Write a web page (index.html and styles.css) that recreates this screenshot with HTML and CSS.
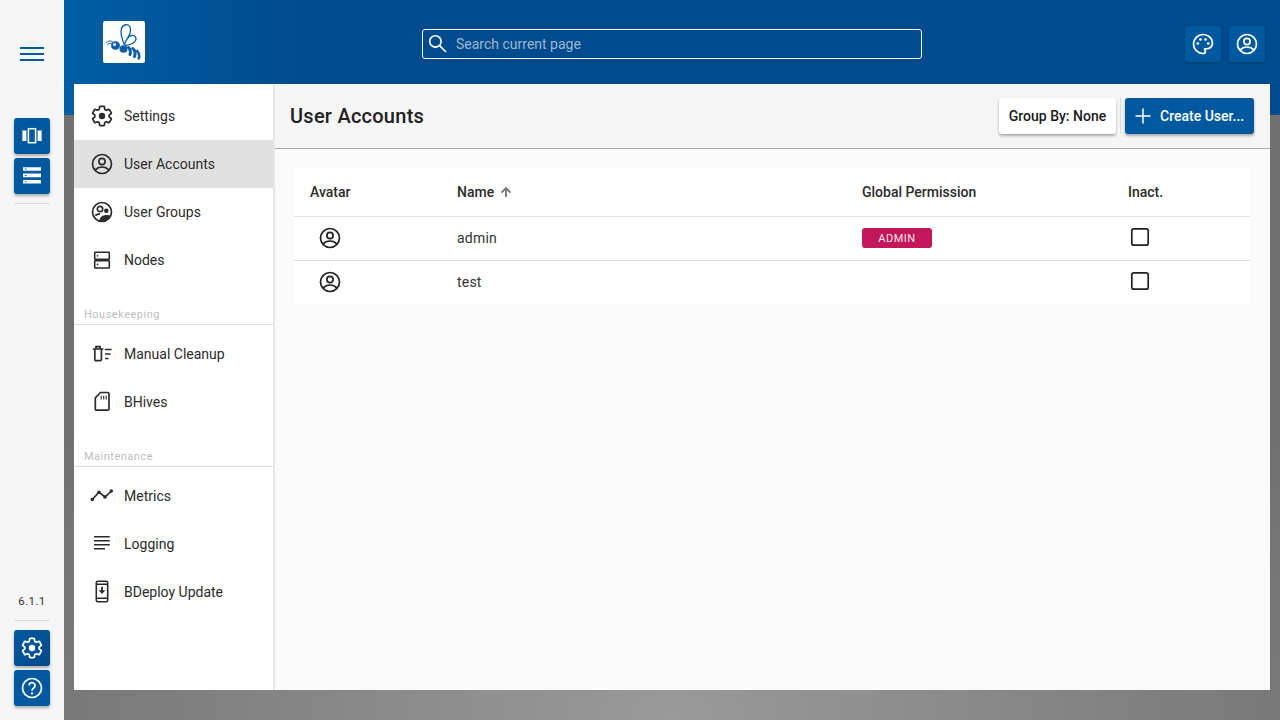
FILE: index.html
```html
<!DOCTYPE html>
<html lang="en">
<head>
<meta charset="utf-8">
<title>User Accounts</title>
<link rel="stylesheet" href="styles.css">
</head>
<body>
<svg class="defs" width="0" height="0" aria-hidden="true">
  <symbol id="i-settings" viewBox="0 0 24 24"><path transform="translate(12 12) scale(.96) translate(-12 -12)" fill="none" stroke="currentColor" stroke-width="1.800" stroke-linejoin="round" d="M19.43 12.98c.04-.32.07-.64.07-.98 0-.34-.03-.66-.07-.98l2.11-1.65c.19-.15.24-.42.12-.64l-2-3.46c-.09-.16-.26-.25-.44-.25-.06 0-.12.01-.17.03l-2.49 1c-.52-.4-1.08-.73-1.69-.98l-.38-2.65C14.46 2.18 14.25 2 14 2h-4c-.25 0-.46.18-.49.42l-.38 2.65c-.61.25-1.17.59-1.69.98l-2.49-1c-.06-.02-.12-.03-.18-.03-.17 0-.34.09-.43.25l-2 3.46c-.13.22-.07.49.12.64l2.11 1.65c-.04.32-.07.65-.07.98 0 .33.03.66.07.98l-2.11 1.65c-.19.15-.24.42-.12.64l2 3.46c.09.16.26.25.44.25.06 0 .12-.01.17-.03l2.49-1c.52.4 1.08.73 1.69.98l.38 2.65c.03.24.24.42.49.42h4c.25 0 .46-.18.49-.42l.38-2.65c.61-.25 1.17-.59 1.69-.98l2.49 1c.06.02.12.03.18.03.17 0 .34-.09.43-.25l2-3.46c.12-.22.07-.49-.12-.64l-2.11-1.65z"/><circle cx="12" cy="12" r="3.200"/></symbol>
  <symbol id="i-account" viewBox="0 0 24 24"><g fill="none" stroke="currentColor" stroke-width="1.700"><circle cx="12" cy="12" r="9.500"/><circle cx="12" cy="9.500" r="3.100"/><path d="M5 18.100C6.800 16 9.300 15 12 15s5.200 1 7 3.100"/></g></symbol>
  <symbol id="i-group" viewBox="0 0 24 24"><g fill="none" stroke="currentColor" stroke-width="1.700"><circle cx="12" cy="12" r="9.500"/><circle cx="10" cy="9" r="2.700"/><path d="M5.200 15.500C6.500 14.400 8.300 13.800 10 13.800"/></g><circle cx="16.300" cy="10.700" r="2.300"/><path d="M9.200 21.500C9.400 17.800 11.500 15.500 15.500 15 17.500 14.800 19.700 15.100 21 15.800 19.800 19 16 22 11.800 22z"/></symbol>
  <symbol id="i-dns" viewBox="0 0 24 24"><g fill="none" stroke="currentColor" stroke-width="1.600"><rect x="4.700" y="4.200" width="14.600" height="7.200" rx=".6"/><rect x="4.700" y="12.800" width="14.600" height="7.200" rx=".6"/></g><circle cx="7.500" cy="7.800" r=".9"/><circle cx="7.500" cy="16.400" r=".9"/></symbol>
  <symbol id="i-sweep" viewBox="0 0 24 24"><path fill="none" stroke="currentColor" stroke-width="1.700" d="M4.800 7.500V17.500a1.200 1.200 0 0 0 1.200 1.200h4.200a1.200 1.200 0 0 0 1.200-1.200V7.500M2.800 7H13.400M6 6.500V4.700h4v1.800M15 7.500h6.700M15 12h5.500M15 16.500h3.500"/></symbol>
  <symbol id="i-sd" viewBox="0 0 24 24"><path fill="none" stroke="currentColor" stroke-width="1.700" stroke-linejoin="round" d="M10.500 2.500H17.800a1.200 1.200 0 0 1 1.200 1.200V19a1.200 1.200 0 0 1-1.200 1.200H6.500A1.200 1.200 0 0 1 5.300 19V7.800z"/><path fill="none" stroke="currentColor" stroke-width="1.100" d="M11.200 5.800v3.600M13.700 5.800v3.600M16.200 5.800v3.600"/></symbol>
  <symbol id="i-timeline" viewBox="0 0 24 24"><path fill="none" stroke="currentColor" stroke-width="1.700" d="M2.300 15.500L9 8.200l6 4.800 6.300-6"/><circle cx="2.300" cy="15.500" r="1.800"/><circle cx="9" cy="8.200" r="1.800"/><circle cx="15" cy="13" r="1.800"/><circle cx="21.300" cy="7" r="1.800"/></symbol>
  <symbol id="i-subject" viewBox="0 0 24 24"><path fill="none" stroke="currentColor" stroke-width="1.500" d="M4 4.800h15.800M4 8.800h15.800M4 12.800h15.800M4 16.800h11"/></symbol>
  <symbol id="i-update" viewBox="0 0 24 24"><g fill="none" stroke="currentColor" stroke-width="1.600"><rect x="6.300" y="1.300" width="11.400" height="20.400" rx="1.500"/><path d="M6.300 4.300h11.400M6.300 18.300h11.400"/></g><path d="M11.100 6.800h1.800v3.500h2.400L12 13.900 8.700 10.300h2.400z"/></symbol>
  <symbol id="i-search" viewBox="0 0 24 24"><g fill="none" stroke="currentColor" stroke-width="1.600"><circle cx="9.400" cy="9.400" r="5.700"/><path d="M13.600 13.600L20 20"/></g></symbol>
  <symbol id="i-carousel" viewBox="0 0 24 24"><path d="M2.400 6.500h4v10.500h-4zM17.600 6.500h4v10.500h-4z"/><rect x="8.400" y="4.700" width="7.200" height="14" fill="none" stroke="currentColor" stroke-width="1.500"/></symbol>
  <symbol id="i-storage" viewBox="0 0 24 24"><path fill-rule="evenodd" d="M3 3.200h18v3.600H3zM4.800 4.500v1h1.800v-1zM3 9.600h18v3.600H3zM4.800 10.900v1h1.800v-1zM3 16h18v3.400H3zM4.800 17.200v1h1.800v-1z"/></symbol>
  <symbol id="i-palette" viewBox="0 0 24 24"><path transform="translate(12 12) scale(.95) translate(-12 -12)" fill="none" stroke="currentColor" stroke-width="1.800" d="M12 22C6.490 22 2 17.510 2 12S6.490 2 12 2s10 4.040 10 9c0 3.310-2.690 6-6 6h-1.770c-.28 0-.5.220-.5.500 0 .12.050.23.130.33.410.47.640 1.060.640 1.670 0 1.380-1.120 2.500-2.500 2.500z"/><circle cx="6.800" cy="11.500" r="1.350"/><circle cx="9.500" cy="7.500" r="1.350"/><circle cx="14.500" cy="7.500" r="1.350"/><circle cx="17.200" cy="11.500" r="1.350"/></symbol>
  <symbol id="i-help" viewBox="0 0 24 24"><g fill="none" stroke="currentColor" stroke-width="1.700"><circle cx="12" cy="12" r="9.500"/><path d="M9 9.500a3 3 0 1 1 4.700 2.500c-1.100.7-1.700 1.400-1.700 2.800"/></g><circle cx="12" cy="17.400" r="1.100"/></symbol>
  <symbol id="i-add" viewBox="0 0 24 24"><path d="M19.500 12.750h-6.750v6.750h-1.500v-6.750H4.500v-1.500h6.750V4.500h1.500v6.750h6.750v1.500z"/></symbol>
  <symbol id="i-up" viewBox="0 0 24 24"><path stroke="currentColor" stroke-width="1.500" d="M4 12l1.410 1.410L11 7.830V20h2V7.830l5.580 5.590L20 12l-8-8-8 8z"/></symbol>
  <symbol id="i-box" viewBox="0 0 24 24"><rect x="3.800" y="3.800" width="16.400" height="16.400" rx="2" fill="none" stroke="currentColor" stroke-width="1.700"/></symbol>
</svg>

<div class="app">
  <aside class="rail">
    <button class="menu" aria-label="Menu"><span></span><span></span><span></span></button>
    <div class="rail-group rail-top">
      <a class="tile"><svg class="icon"><use href="#i-carousel"/></svg></a>
      <a class="tile"><svg class="icon"><use href="#i-storage"/></svg></a>
      <hr class="rail-sep">
    </div>
    <div class="rail-group rail-bottom">
      <div class="version">6.1.1</div>
      <hr class="rail-sep">
      <a class="tile tile-active"><svg class="icon"><use href="#i-settings"/></svg></a>
      <a class="tile"><svg class="icon"><use href="#i-help"/></svg></a>
    </div>
  </aside>

  <div class="main">
    <header class="topbar">
      <div class="top-left">
        <div class="logo">
          <svg viewBox="0 0 42 42" width="42" height="42">
            <g fill="none" stroke="#0b5ea8" stroke-linecap="round">
              <path stroke-width="1.300" d="M21 23C19 18 17 12 18.500 7.500C20 3 25.500 2.500 27 6C28.500 10 26.500 14 25 16.500"/>
              <path stroke-width="1.300" d="M21.500 23.500C23 19 25.500 15 28.500 14.500C32 14 34 17 32.500 19.500C31 22.500 26 24 22.500 24.500"/>
              <path stroke-width="3" d="M25.500 26.500C27.500 28.500 27.800 31 27 33.500"/>
              <path stroke-width="3" d="M29.800 27.500C32 29.500 32.500 33 31.500 35.500"/>
              <path stroke-width="2.600" d="M34.200 30C36 32 36.500 35 35.800 37.500"/>
              <path stroke-width="1" d="M3.500 21.500C5.500 19.500 8 19.500 10 21M4.500 23.500C6 22 8 22 9.500 22.500"/>
            </g>
            <ellipse cx="12.500" cy="24.500" rx="4.500" ry="4.300" fill="#0b5ea8"/>
            <circle cx="11.500" cy="23.500" r="1.500" fill="#fff"/>
            <ellipse cx="20.500" cy="28" rx="4" ry="3.800" fill="#0b5ea8"/>
          </svg>
        </div>
      </div>
      <label class="search">
        <svg class="icon"><use href="#i-search"/></svg>
        <span class="placeholder">Search current page</span>
      </label>
      <div class="top-right">
        <a class="tile tile-soft"><svg class="icon"><use href="#i-palette"/></svg></a>
        <a class="tile tile-soft"><svg class="icon"><use href="#i-account"/></svg></a>
      </div>
    </header>

    <div class="panels">
      <nav class="nav">
        <a class="nav-item"><svg class="icon"><use href="#i-settings"/></svg>Settings</a>
        <a class="nav-item is-current"><svg class="icon"><use href="#i-account"/></svg>User Accounts</a>
        <a class="nav-item"><svg class="icon"><use href="#i-group"/></svg>User Groups</a>
        <a class="nav-item"><svg class="icon"><use href="#i-dns"/></svg>Nodes</a>
        <div class="nav-section">Housekeeping</div>
        <a class="nav-item"><svg class="icon"><use href="#i-sweep"/></svg>Manual Cleanup</a>
        <a class="nav-item"><svg class="icon"><use href="#i-sd"/></svg>BHives</a>
        <div class="nav-section">Maintenance</div>
        <a class="nav-item"><svg class="icon"><use href="#i-timeline"/></svg>Metrics</a>
        <a class="nav-item"><svg class="icon"><use href="#i-subject"/></svg>Logging</a>
        <a class="nav-item"><svg class="icon"><use href="#i-update"/></svg>BDeploy Update</a>
      </nav>

      <section class="content">
        <div class="titlebar">
          <h1>User Accounts</h1>
          <div class="actions">
            <button class="btn btn-white">Group By: None</button>
            <span class="action-sep"></span>
            <button class="btn btn-blue"><svg class="icon"><use href="#i-add"/></svg>Create User...</button>
          </div>
        </div>
        <div class="table-wrap">
          <table>
            <colgroup><col class="c1"><col class="c2"><col class="c3"><col class="c4"></colgroup>
            <thead>
              <tr>
                <th>Avatar</th>
                <th><span class="sort">Name<svg class="sort-icon"><use href="#i-up"/></svg></span></th>
                <th>Global Permission</th>
                <th>Inact.</th>
              </tr>
            </thead>
            <tbody>
              <tr>
                <td><svg class="icon avatar"><use href="#i-account"/></svg></td>
                <td>admin</td>
                <td><span class="chip">ADMIN</span></td>
                <td><svg class="icon check"><use href="#i-box"/></svg></td>
              </tr>
              <tr>
                <td><svg class="icon avatar"><use href="#i-account"/></svg></td>
                <td>test</td>
                <td></td>
                <td><svg class="icon check"><use href="#i-box"/></svg></td>
              </tr>
            </tbody>
          </table>
        </div>
      </section>
    </div>
  </div>
</div>
</body>
</html>
```
FILE: styles.css
```css
* { box-sizing: border-box; }
html, body { height: 100%; }
body {
  margin: 0;
  font-family: Roboto, "Liberation Sans", sans-serif;
  font-size: 14px;
  color: #212121;
  overflow: hidden;
}
.defs { position: absolute; }
.icon { width: 24px; height: 24px; fill: currentColor; display: block; flex: none; }

.app { display: flex; height: 720px; }

/* left rail */
.rail {
  width: 64px;
  flex: none;
  background: #f5f5f5;
  display: flex;
  flex-direction: column;
  align-items: center;
}
.menu {
  width: 24px;
  height: 14px;
  margin-top: 47px;
  padding: 0;
  border: 0;
  background: none;
  display: flex;
  flex-direction: column;
  justify-content: space-between;
}
.menu span { display: block; height: 2px; background: #00589f; }
.rail-group { display: flex; flex-direction: column; align-items: center; gap: 4px; }
.rail-top { margin-top: 57px; }
.rail-bottom { margin-top: auto; margin-bottom: 14px; }
.rail-sep { width: 36px; height: 1px; margin: 5px 0 0; border: 0; background: #dcdcdc; }
.rail-bottom .rail-sep { margin: 8px 0 5px; }
.version { font-size: 11.500px; letter-spacing: .4px; color: #333; line-height: 14px; }

.tile {
  width: 36px;
  height: 36px;
  border-radius: 3px;
  background: #00599f;
  color: #fff;
  display: flex;
  align-items: center;
  justify-content: center;
  box-shadow: 0 2px 3px rgba(0, 0, 0, .3);
}
.tile-active { background: linear-gradient(135deg, #00599f, #00488a); }
.tile-soft { box-shadow: 0 1px 3px rgba(0, 0, 0, .2); }

/* main column */
.main {
  flex: 1;
  min-width: 0;
  display: flex;
  flex-direction: column;
  background:
    linear-gradient(90deg, #005ea4 0, #004b8d 240px) top left / 100% 115px no-repeat,
    radial-gradient(ellipse 760px 480px at 50% 100%, #9a9a9a, #707070);
}
.topbar {
  height: 84px;
  flex: none;
  display: grid;
  grid-template-columns: minmax(0, 1fr) 500px minmax(0, 1fr);
  align-items: center;
}
.top-left { padding-left: 39px; }
.logo { width: 42px; height: 42px; border-radius: 2px; background: #fff; }
.logo svg { display: block; }
.search {
  height: 30px;
  margin-top: 4px;
  padding-left: 3px;
  border: 1px solid #fff;
  border-radius: 3px;
  display: flex;
  align-items: center;
  gap: 6px;
  color: #fff;
}
.placeholder { color: rgba(255, 255, 255, .62); font-size: 14px; }
.top-right {
  display: flex;
  justify-content: flex-end;
  gap: 8px;
  padding-right: 15px;
  margin-top: 4px;
}

/* panels */
.panels { height: 606px; flex: none; margin: 0 10px; display: flex; }
.nav {
  width: 201px;
  flex: none;
  padding-top: 8px;
  background: #fff;
  border-right: 2px solid #e6e6e6;
}
.nav-item {
  height: 48px;
  padding-left: 16px;
  display: flex;
  align-items: center;
  gap: 10px;
  color: #2b2b2b;
  font-size: 14px;
}
.nav-item.is-current { background: #e0e0e0; }
.nav-section {
  height: 41px;
  margin-bottom: 5px;
  padding: 24px 0 0 10px;
  border-bottom: 1px solid #dedede;
  font-size: 11px;
  line-height: 13px;
  letter-spacing: .5px;
  color: #bdbdbd;
}
.content { flex: 1; min-width: 0; background: #fafafa; display: flex; flex-direction: column; }
.titlebar {
  height: 65px;
  flex: none;
  padding: 0 16px 1px 15px;
  background: #f5f5f5;
  border-bottom: 1px solid #a8a8a8;
  display: flex;
  align-items: center;
  justify-content: space-between;
}
h1 { margin: 0; font-size: 20px; font-weight: 500; letter-spacing: .25px; color: #212121; }
.actions { display: flex; align-items: center; }
.btn {
  height: 36px;
  border: 0;
  border-radius: 3px;
  font-family: inherit;
  font-size: 14px;
  font-weight: 500;
  display: flex;
  align-items: center;
  box-shadow: 0 2px 3px rgba(0, 0, 0, .3);
}
.btn-white { width: 117px; justify-content: center; padding: 0; background: #fff; color: #1a1a1a; }
.btn-blue { width: 129px; padding: 0 0 0 6px; gap: 5px; background: #00599f; color: #fff; }
.action-sep { width: 1px; height: 36px; margin: 0 4px; background: #dcdcdc; }

/* table */
.table-wrap { padding: 19px 20px 19px 19px; }
table { width: 956px; border-collapse: collapse; table-layout: fixed; background: #fff; }
.c1 { width: 147px; }
.c2 { width: 405px; }
.c3 { width: 266px; }
.c4 { width: 138px; }
th {
  height: 48px;
  padding: 0 0 0 16px;
  text-align: left;
  font-weight: 500;
  font-size: 14px;
  color: #2b2b2b;
  border-bottom: 1px solid #e0e0e0;
}
td { height: 44px; padding: 0 0 0 16px; font-size: 14px; color: #333; letter-spacing: .2px; }
tbody tr:first-child td { border-bottom: 1px solid #e0e0e0; }
td .icon { color: #212121; }
.avatar { margin-left: 8px; }
.check { margin-bottom: 2px; }
.sort { display: flex; align-items: center; gap: 5px; }
.sort-icon { width: 14px; height: 14px; fill: currentColor; color: #757575; }
.chip {
  width: 70px;
  height: 20px;
  border-radius: 3px;
  background: #c2185b;
  color: rgba(255, 255, 255, .92);
  font-size: 11px;
  letter-spacing: .5px;
  display: flex;
  align-items: center;
  justify-content: center;
}
```
